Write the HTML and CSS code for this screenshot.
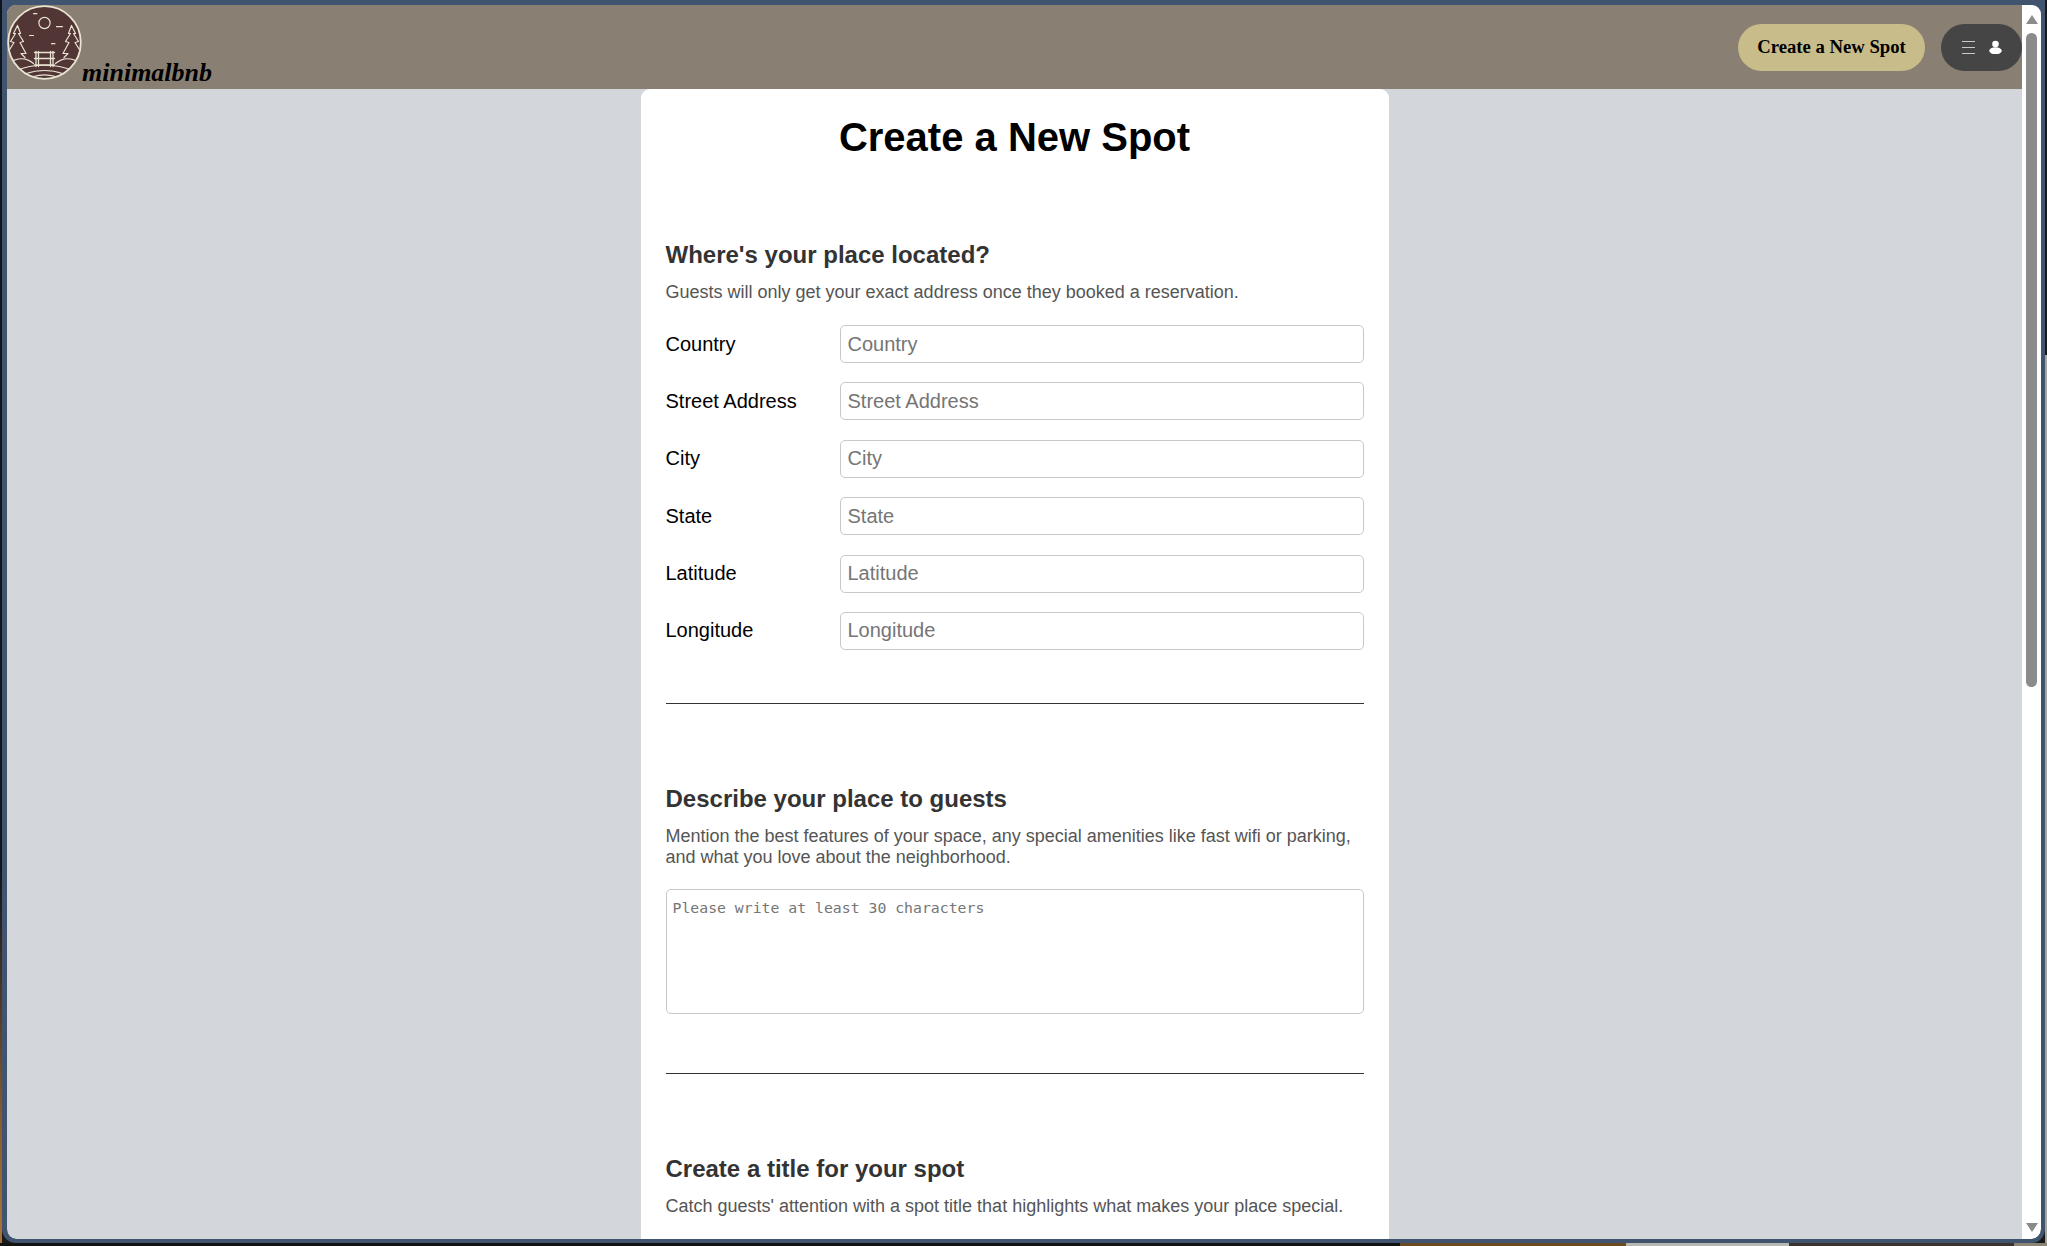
FILE: index.html
```html
<!DOCTYPE html>
<html lang="en">
<head>
<meta charset="utf-8">
<title>minimalbnb</title>
<link rel="stylesheet" href="styles.css">
</head>
<body>
<div class="window">
  <div class="page">
    <header class="topbar">
      <a class="brand" href="#">
        <svg class="logo" viewBox="0.5 0.5 76 76" width="76" height="76" aria-hidden="true">
          <defs><clipPath id="disc"><circle cx="38" cy="38" r="36"/></clipPath></defs>
          <circle cx="38" cy="38" r="36.300" fill="#523535" stroke="#e9e4d2" stroke-width="1.800"/>
          <g fill="none" stroke="#e9e4d2" stroke-width="1.200" stroke-linecap="round" stroke-linejoin="round">
            <circle cx="38" cy="18.500" r="5.600"/>
            <path d="M27 9.200h3.400M50 22.200h6M23 31h4M45 39.200h3.400"/>
            <g clip-path="url(#disc)">
              <path d="M11 21l3 8h-2l5 8-3.500 1 6 11h-5l4 4M11 21l-4 8h2l-5 8 3.500 1-5 8"/>
              <path d="M65 21l-3 8h2l-5 8 3.500 1-6 11h5l-4 4M65 21l4 8h-2l5 8-3.500 1 5 8"/>
              <path d="M3 58c8-5 17-5 24 1M73 58c-8-5-17-5-24 1"/>
              <path d="M10 66c16-7 40-7 56 0M20 69c11-4 25-4 36 0M27 72c7-2 15-2 22 0"/>
            </g>
            <path d="M29.500 47v15M32 47v15M44 47v15M46.500 47v15M28 48h20M28 54h20M28 60.500h20" stroke-width="1.300"/>
          </g>
        </svg>
        <span class="wordmark">minimalbnb</span>
      </a>
      <nav class="actions">
        <button class="create-btn" type="button">Create a New Spot</button>
        <button class="menu-btn" type="button" aria-label="Menu">
          <svg viewBox="0 0 13 13" width="13" height="13" aria-hidden="true"><path d="M0 .5h13M0 6.500h13M0 12.500h13" stroke="#c9c9c9" fill="none"/></svg>
          <svg viewBox="0 0 13 13" width="13" height="14" aria-hidden="true"><circle cx="6.500" cy="3.500" r="3.300" fill="#fff"/><ellipse cx="6.500" cy="10.300" rx="6.300" ry="3.500" fill="#fff"/></svg>
        </button>
      </nav>
    </header>
    <main class="content">
      <form class="card">
        <h1>Create a New Spot</h1>
        <section class="block">
          <h2>Where's your place located?</h2>
          <p>Guests will only get your exact address once they booked a reservation.</p>
          <div class="fields">
            <label class="field"><span>Country</span><input placeholder="Country"></label>
            <label class="field"><span>Street Address</span><input placeholder="Street Address"></label>
            <label class="field"><span>City</span><input placeholder="City"></label>
            <label class="field"><span>State</span><input placeholder="State"></label>
            <label class="field"><span>Latitude</span><input placeholder="Latitude"></label>
            <label class="field"><span>Longitude</span><input placeholder="Longitude"></label>
          </div>
        </section>
        <section class="block">
          <h2>Describe your place to guests</h2>
          <p>Mention the best features of your space, any special amenities like fast wifi or parking, and what you love about the neighborhood.</p>
          <textarea placeholder="Please write at least 30 characters"></textarea>
        </section>
        <section class="block">
          <h2>Create a title for your spot</h2>
          <p>Catch guests' attention with a spot title that highlights what makes your place special.</p>
        </section>
      </form>
    </main>
  </div>
  <div class="scrollbar" aria-hidden="true">
    <span class="arrow up"></span>
    <span class="track"><span class="thumb"></span></span>
    <span class="arrow down"></span>
  </div>
</div>
</body>
</html>
```
FILE: styles.css
```css
* { box-sizing: border-box; }
html, body { margin: 0; height: 100%; overflow: hidden; }
body {
  width: 2047px;
  height: 1246px;
  padding: 5px 2px 3px 2px;
  background:
    linear-gradient(to right, #131313 0 1400px, #6a4a22 1400px 1626px, #b9b9b4 1626px 1789px, #3a342c 1789px 2014px, #8d8478 2014px) bottom / 100% 3px no-repeat,
    linear-gradient(to bottom, #10151b 0 70%, #8a5a2e 90%, #a9763a 100%) left / 2px 100% no-repeat,
    linear-gradient(to bottom, #17191c 0 355px, #a6a69e 355px 100%) right / 2px 100% no-repeat,
    #1a1a1a;
  font-family: "Liberation Sans", Arial, sans-serif;
}
.window {
  height: 1238px;
  display: flex;
  overflow: hidden;
  border: solid #41546f;
  border-width: 0 4px 4px 5px;
  box-shadow: 0 -5px 0 #41546f;
  border-radius: 0 0 14px 14px;
  background: #41546f;
}
.page {
  flex: 1;
  min-width: 0;
  display: flex;
  flex-direction: column;
  overflow: hidden;
  background: #d3d6db;
  border-radius: 9px 0 0 9px;
}
.topbar {
  flex: none;
  height: 84px;
  display: flex;
  justify-content: space-between;
  align-items: center;
  background: #8a7f73;
}
.brand {
  display: flex;
  align-items: flex-end;
  align-self: flex-start;
  text-decoration: none;
  color: #000;
}
.logo { display: block; flex: none; }
.wordmark {
  font-family: "Liberation Serif", cursive;
  font-style: italic;
  font-size: 26px;
  font-weight: bold;
  line-height: 30px;
  margin: 0 0 -7px -1px;
}
.actions { display: flex; align-items: center; gap: 16px; }
.create-btn {
  width: 187px;
  height: 47px;
  border: 0;
  border-radius: 24px;
  background: #c9bc8b;
  color: #000;
  font: bold 18.700px "Liberation Serif", "Times New Roman", serif;
  padding: 0;
}
.menu-btn {
  width: 81px;
  height: 47px;
  border: 0;
  border-radius: 24px;
  background: #454545;
  display: flex;
  align-items: center;
  justify-content: center;
  gap: 14px;
  padding: 0;
}
.content { flex: 1; display: flex; justify-content: center; min-height: 0; overflow: hidden; }
.card {
  width: 748px;
  flex: none;
  background: #fff;
  border-radius: 9px 9px 0 0;
  padding: 0 25px;
}
h1 {
  margin: 0;
  padding: 24px 0 0;
  height: 71px;
  text-align: center;
  font-size: 40px;
  line-height: 48px;
  font-weight: bold;
  color: #000;
}
.block { padding: 81px 0 53px; border-bottom: 1px solid #333; }
.block:last-child { border-bottom: 0; }
h2 {
  margin: 0;
  font-size: 24px;
  line-height: 28px;
  font-weight: bold;
  color: #333;
}
.block p {
  margin: 13px 0 0;
  font-size: 18px;
  line-height: 21px;
  color: #555;
}
.fields { display: flex; flex-direction: column; gap: 19.400px; margin-top: 22px; }
.field { display: flex; align-items: center; height: 38px; font-size: 20px; color: #000; }
.field span { width: 174px; flex: none; }
.field input {
  flex: 1;
  min-width: 0;
  height: 38px;
  border: 1px solid #c8c8c8;
  border-radius: 5px;
  padding: 0 7px;
  font: inherit;
  background: #fff;
}
input::placeholder, textarea::placeholder { color: #757575; opacity: 1; }
textarea {
  display: block;
  width: 100%;
  height: 125px;
  margin: 21px 0 6px;
  padding: 9px 6px;
  border: 1px solid #c8c8c8;
  border-radius: 5px;
  font: 14.800px/18px "DejaVu Sans Mono", monospace;
  resize: none;
  background: #fff;
}
.scrollbar {
  width: 19px;
  flex: none;
  display: flex;
  flex-direction: column;
  align-items: center;
  background: #fff;
  border-radius: 0 9px 9px 0;
  padding: 10px 0 7px;
}
.arrow { width: 0; height: 0; flex: none; border-left: 6.500px solid transparent; border-right: 6.500px solid transparent; }
.arrow.up { border-bottom: 9px solid #8b8b8b; }
.arrow.down { border-top: 9px solid #8b8b8b; }
.track { flex: 1; width: 11px; padding-top: 9px; }
.thumb { display: block; width: 11px; height: 654px; background: #8b8b8b; border-radius: 6px; }
```
